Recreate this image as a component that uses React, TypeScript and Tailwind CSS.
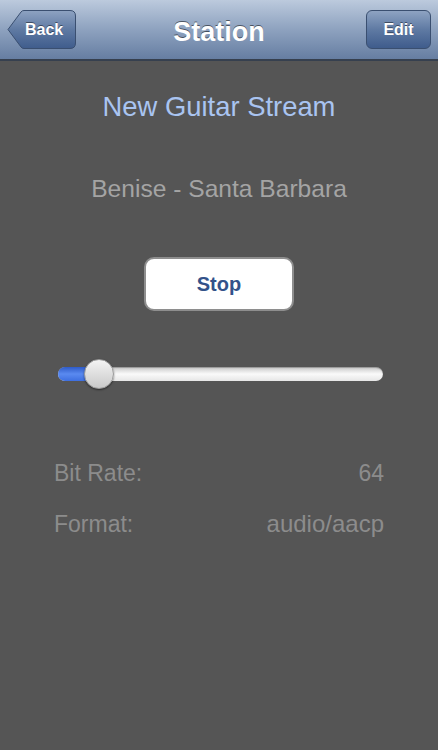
import React from 'react'

function BackButton() {
  return (
    <button className="relative ml-[7px] flex h-[39px] items-center">
      <svg width="69" height="39" viewBox="0 0 69 39" className="absolute left-0 top-0">
        <defs>
          <linearGradient id="bk" x1="0" y1="0" x2="0" y2="1">
            <stop offset="0" stopColor="#8ea3c2" />
            <stop offset="0.5" stopColor="#5f7aa3" />
            <stop offset="1" stopColor="#3f5c8c" />
          </linearGradient>
        </defs>
        <path
          d="M1 19.5 L14 2 Q15 0.5 17 0.5 L63 0.5 Q68.5 0.5 68.5 6 L68.5 33 Q68.5 38.5 63 38.5 L17 38.5 Q15 38.5 14 37 Z"
          fill="url(#bk)"
          stroke="#3a4f70"
          strokeWidth="1"
        />
      </svg>
      <span className="relative pl-[18px] pr-[10px] text-[16px] font-bold text-white [text-shadow:0_-1px_0_rgba(0,0,0,0.45)]">
        Back
      </span>
    </button>
  )
}

export default function App() {
  return (
    <div className="flex h-[750px] w-[438px] flex-col bg-[#555555] font-['Liberation_Sans',Arial,sans-serif]">
      <div className="relative flex h-[61px] shrink-0 items-center justify-between border-b-[2px] border-[#36404f] bg-gradient-to-b from-[#bccadd] via-[#8ea2bf] to-[#667ea2] pr-[7px]">
        <BackButton />
        <h1 className="absolute left-0 right-0 top-[12px] text-center text-[27px] font-bold text-white [text-shadow:0_-1px_0_rgba(0,0,0,0.5)]">
          Station
        </h1>
        <button className="relative h-[39px] w-[65px] rounded-[6px] border border-[#3a4f70] bg-gradient-to-b from-[#8ea3c2] via-[#5f7aa3] to-[#3f5c8c] text-[16px] font-bold text-white [text-shadow:0_-1px_0_rgba(0,0,0,0.45)]">
          Edit
        </button>
      </div>

      <div className="flex flex-col items-center">
        <p className="mt-[32px] text-[27.4px] leading-[28px] text-[#a9c4f1]">New Guitar Stream</p>
        <p className="mt-[54px] text-[24.6px] leading-[28px] text-[#a4a4a4]">Benise - Santa Barbara</p>
        <button className="mt-[54px] h-[54px] w-[150px] rounded-[10px] border-2 border-[#8e8e8e] bg-white text-[20px] font-bold text-[#33528a]">
          Stop
        </button>
      </div>

      <div className="relative mx-[58px] mt-[56px] h-[14px] w-[325px]">
        <div className="absolute inset-0 rounded-full bg-gradient-to-b from-[#c8c8c8] via-[#fafafa] to-[#e6e6e6] shadow-[inset_0_1px_1px_rgba(0,0,0,0.25)]" />
        <div className="absolute bottom-0 left-0 top-0 w-[45px] rounded-l-full bg-gradient-to-b from-[#2f5bc8] via-[#5a8af0] to-[#3e6fe0]" />
        <div className="absolute left-[26px] top-[-8px] h-[30px] w-[30px] rounded-full border border-[#9a9a9a] bg-gradient-to-b from-[#f4f4f4] to-[#c9c9c9] shadow-[0_1px_2px_rgba(0,0,0,0.5)]" />
      </div>

      <div className="mx-[54px] mt-[80px] flex flex-col gap-[27px] text-[23px] leading-[24px] text-[#8c8c8c]">
        <div className="flex justify-between">
          <span>Bit Rate:</span>
          <span>64</span>
        </div>
        <div className="flex justify-between">
          <span>Format:</span>
          <span className="text-[24px]">audio/aacp</span>
        </div>
      </div>
    </div>
  )
}
